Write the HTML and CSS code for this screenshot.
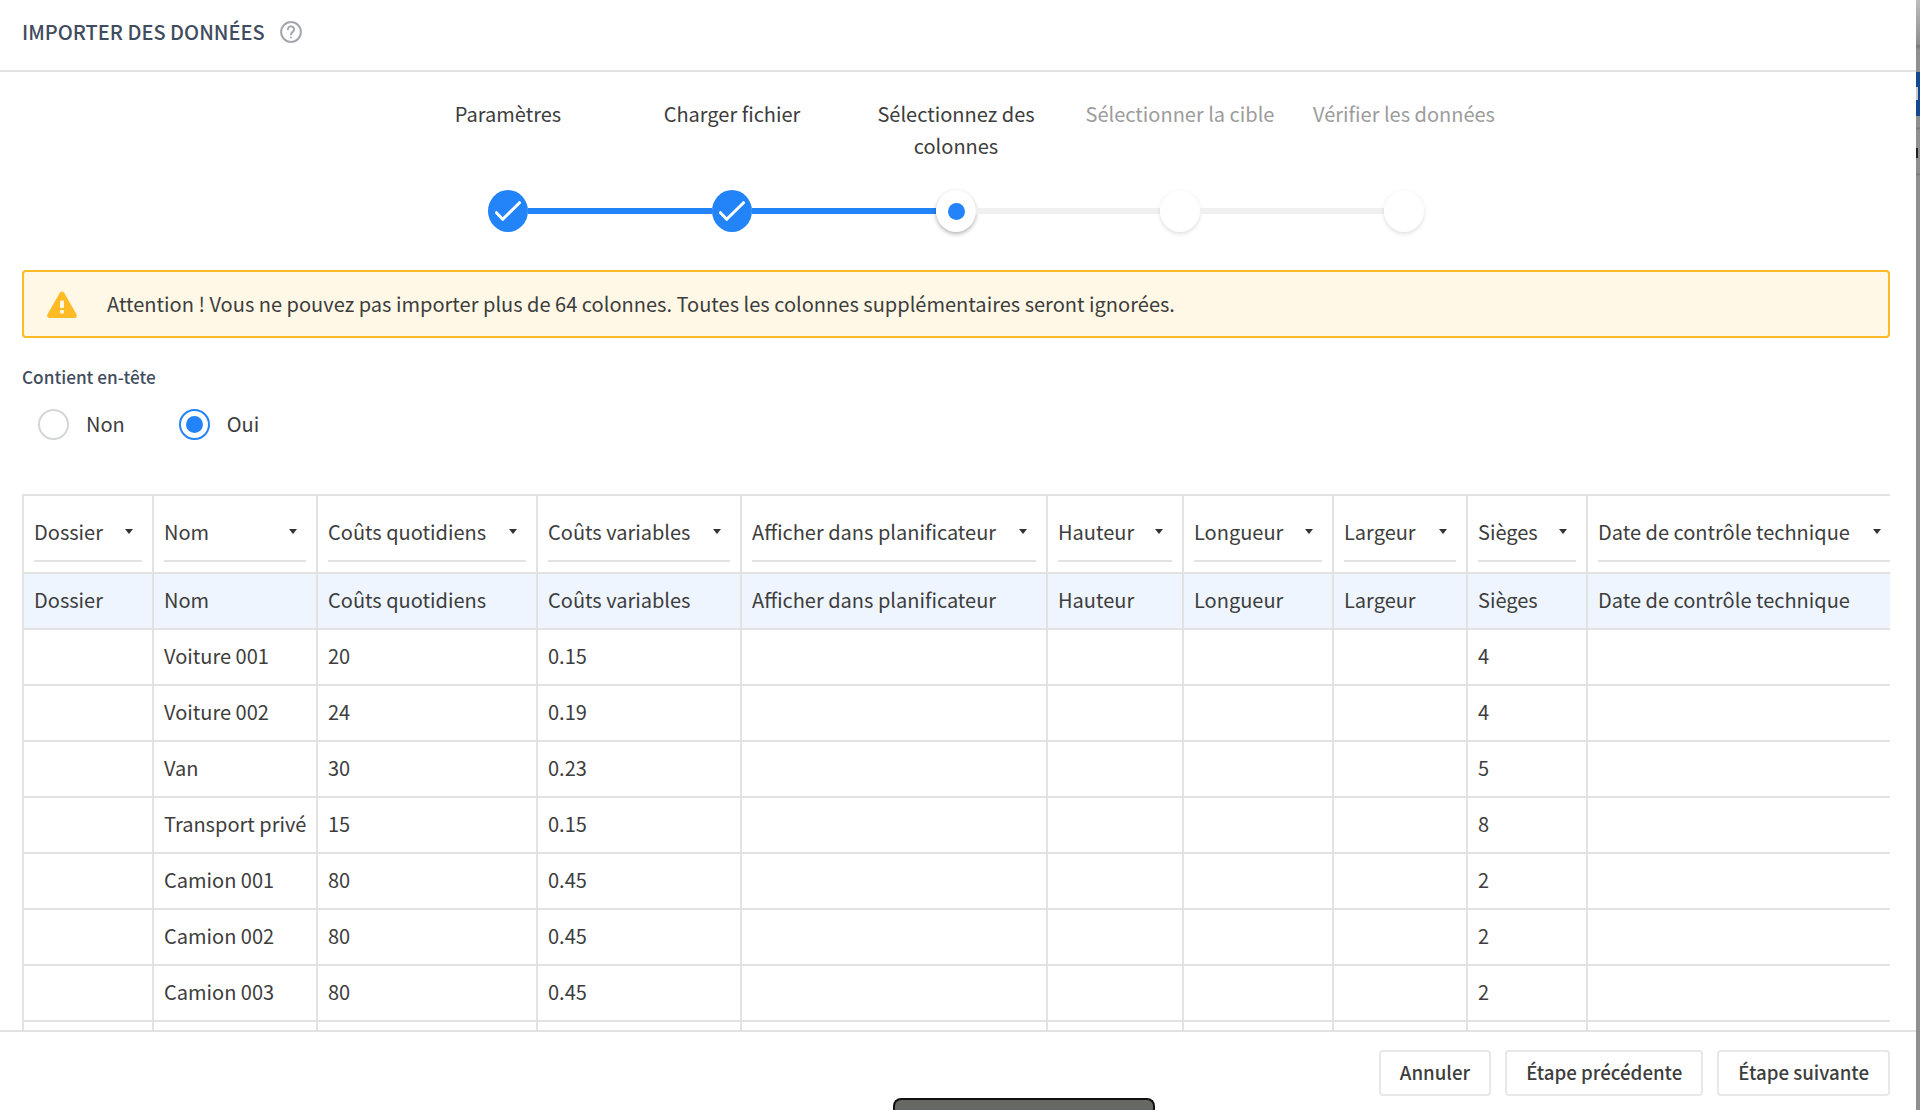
FILE: index.html
```html
<!DOCTYPE html>
<html lang="fr">
<head>
    <meta charset="UTF-8">
    <meta name="viewport" content="width=device-width, initial-scale=1.0">
    <title>Importer des données</title>
    <link rel="stylesheet" href="styles.css">
</head>
<body>

<div class="page">
<div class="dialog">
    <header class="dialog-header">
        <h1>IMPORTER DES DONNÉES</h1>
        <svg class="help-icon" viewBox="0 0 20 20" fill="none" stroke="#a3a7ae" stroke-width="1.8" stroke-linecap="round">
            <circle cx="10" cy="10" r="9"/>
            <path d="M7.2 7.6a2.8 2.8 0 1 1 4.4 2.3c-1 .7-1.6 1.2-1.6 2.4"/>
            <path d="M10 15v.1"/>
        </svg>
    </header>

    <div class="dialog-body">
        <div class="step-labels">
            <div class="step-label">Paramètres</div>
            <div class="step-label">Charger fichier</div>
            <div class="step-label">Sélectionnez des colonnes</div>
            <div class="step-label muted">Sélectionner la cible</div>
            <div class="step-label muted">Vérifier les données</div>
        </div>

        <div class="step-track">
            <div class="dot done">
                <svg viewBox="0 0 26 20" fill="none" stroke="#fff" stroke-width="3" stroke-linecap="round" stroke-linejoin="round"><path d="M1.5 11.7l6.2 6.6L24.5 1.7"/></svg>
            </div>
            <div class="bar done"></div>
            <div class="dot done">
                <svg viewBox="0 0 26 20" fill="none" stroke="#fff" stroke-width="3" stroke-linecap="round" stroke-linejoin="round"><path d="M1.5 11.7l6.2 6.6L24.5 1.7"/></svg>
            </div>
            <div class="bar done"></div>
            <div class="dot current"><span></span></div>
            <div class="bar"></div>
            <div class="dot"></div>
            <div class="bar"></div>
            <div class="dot"></div>
        </div>

        <div class="alert">
            <svg class="alert-icon" viewBox="0 0 30 27">
                <path fill="#ffbb26" stroke="#ffbb26" stroke-width="5" stroke-linejoin="round" d="M15 3L2.7 24.5h24.6z"/>
                <rect x="13" y="9.5" width="4" height="7.5" rx="1" fill="#fff8e6"/>
                <rect x="13" y="19" width="4" height="3.4" rx="1" fill="#fff8e6"/>
            </svg>
            <span class="alert-text">Attention ! Vous ne pouvez pas importer plus de 64 colonnes. Toutes les colonnes supplémentaires seront ignorées.</span>
        </div>

        <div class="field-label">Contient en-tête</div>
        <div class="radios">
            <label class="radio"><span class="radio-circle"></span>Non</label>
            <label class="radio"><span class="radio-circle checked"></span>Oui</label>
        </div>

        <div class="table-wrap">
            <table>
                <colgroup>
                    <col class="c1"><col class="c2"><col class="c3"><col class="c4"><col class="c5">
                    <col class="c6"><col class="c7"><col class="c8"><col class="c9"><col class="c10">
                </colgroup>
                <thead>
                    <tr class="selects">
                        <th><div class="select">Dossier</div></th>
                        <th><div class="select">Nom</div></th>
                        <th><div class="select">Coûts quotidiens</div></th>
                        <th><div class="select">Coûts variables</div></th>
                        <th><div class="select">Afficher dans planificateur</div></th>
                        <th><div class="select">Hauteur</div></th>
                        <th><div class="select">Longueur</div></th>
                        <th><div class="select">Largeur</div></th>
                        <th><div class="select">Sièges</div></th>
                        <th><div class="select">Date de contrôle technique</div></th>
                    </tr>
                </thead>
                <tbody>
                    <tr class="head-row"><td>Dossier</td><td>Nom</td><td>Coûts quotidiens</td><td>Coûts variables</td><td>Afficher dans planificateur</td><td>Hauteur</td><td>Longueur</td><td>Largeur</td><td>Sièges</td><td>Date de contrôle technique</td></tr>
                    <tr><td></td><td>Voiture 001</td><td>20</td><td>0.15</td><td></td><td></td><td></td><td></td><td>4</td><td></td></tr>
                    <tr><td></td><td>Voiture 002</td><td>24</td><td>0.19</td><td></td><td></td><td></td><td></td><td>4</td><td></td></tr>
                    <tr><td></td><td>Van</td><td>30</td><td>0.23</td><td></td><td></td><td></td><td></td><td>5</td><td></td></tr>
                    <tr><td></td><td>Transport privé</td><td>15</td><td>0.15</td><td></td><td></td><td></td><td></td><td>8</td><td></td></tr>
                    <tr><td></td><td>Camion 001</td><td>80</td><td>0.45</td><td></td><td></td><td></td><td></td><td>2</td><td></td></tr>
                    <tr><td></td><td>Camion 002</td><td>80</td><td>0.45</td><td></td><td></td><td></td><td></td><td>2</td><td></td></tr>
                    <tr><td></td><td>Camion 003</td><td>80</td><td>0.45</td><td></td><td></td><td></td><td></td><td>2</td><td></td></tr>
                    <tr><td></td><td></td><td></td><td></td><td></td><td></td><td></td><td></td><td></td><td></td></tr>
                </tbody>
            </table>
        </div>
    </div>

    <footer class="dialog-footer">
        <button class="btn">Annuler</button>
        <button class="btn">Étape précédente</button>
        <button class="btn">Étape suivante</button>
    </footer>
</div>
<div class="backdrop-strip"></div>
</div>
<div class="toast-edge"></div>

</body>
</html>
```

FILE: styles.css
```css
body {
    margin: 0;
    padding: 0;
    overflow: hidden;
    font-family: "Noto Sans CJK SC", "Noto Sans", sans-serif;
    font-size: 20px;
    color: #3d3d3d;
    background-color: #fff;
}
.page {
    display: flex;
    height: 1110px;
}
.dialog {
    flex: 1;
    min-width: 0;
    display: flex;
    flex-direction: column;
}
.backdrop-strip {
    width: 4px;
    background:
        linear-gradient(#c8c8c8, #c8c8c8) 0 87px / 2px 13px no-repeat,
        linear-gradient(#222, #222) 0 148px / 2px 10px no-repeat,
        linear-gradient(to bottom, #bdbdbd 0, #8f8f8f 44px, #777 46px, #8f8f8f 50px, #8f8f8f 72px, #15498f 72px, #15498f 116px, #8f8f8f 116px, #8f8f8f 127px, #777 128px, #8f8f8f 130px, #8f8f8f 173px, #777 174px, #8f8f8f 176px, #8f8f8f 100%);
}
.dialog-header {
    height: 70px;
    padding: 0 0 0 22px;
    display: flex;
    align-items: center;
    gap: 15px;
    border-bottom: 2px solid #e2e2e2;
    flex-shrink: 0;
}
h1 {
    margin: 0;
    padding-bottom: 7px;
    font-size: 20px;
    line-height: 30px;
    font-weight: 500;
    color: #3f4c5e;
}
.help-icon {
    width: 22px;
    height: 22px;
    margin-bottom: 7px;
}
.dialog-body {
    flex: 1;
    min-height: 0;
    overflow: hidden;
    padding: 26px 26px 0 22px;
}
.step-labels {
    display: grid;
    grid-template-columns: repeat(5, 224px);
    justify-content: center;
}
.step-label {
    height: 64px;
    padding: 0 8px;
    line-height: 32px;
    text-align: center;
}
.step-label.muted {
    color: #9c9c9c;
}
.step-track {
    width: 936px;
    margin: 28px auto 38px auto;
    display: flex;
    align-items: center;
}
.dot {
    width: 40px;
    height: 42px;
    border-radius: 50%;
    flex-shrink: 0;
    display: flex;
    align-items: center;
    justify-content: center;
    background-color: #fff;
    box-shadow: 0 2px 4px rgba(0,0,0,0.12);
}
.dot.done {
    background-color: #2383f8;
    box-shadow: none;
}
.dot.done svg {
    width: 26px;
    height: 20px;
}
.dot.current {
    box-shadow: 0 2px 4px rgba(0,0,0,0.3);
}
.dot.current span {
    width: 17px;
    height: 17px;
    border-radius: 50%;
    background-color: #2383f8;
}
.bar {
    flex: 1;
    height: 6px;
    background-color: #f0f0f0;
}
.bar.done {
    background-color: #2383f8;
}
.alert {
    height: 68px;
    box-sizing: border-box;
    display: flex;
    align-items: center;
    gap: 30px;
    padding-left: 23px;
    background-color: #fff8e6;
    border: 2px solid #ffbb26;
    border-radius: 4px;
}
.alert-icon {
    width: 30px;
    height: 27px;
    flex-shrink: 0;
}
.alert-text {
    font-size: 20.05px;
    padding-bottom: 2px;
}
.field-label {
    margin-top: 25px;
    font-size: 17.2px;
    line-height: 28px;
    font-weight: 500;
    color: #3f4c5e;
}
.radios {
    display: flex;
    gap: 54px;
    margin-top: 17px;
    padding-left: 16px;
}
.radio {
    display: flex;
    align-items: center;
    gap: 17px;
    line-height: 32px;
}
.radio-circle {
    width: 31px;
    height: 31px;
    box-sizing: border-box;
    border: 2px solid #d3d5d8;
    border-radius: 50%;
    display: flex;
    align-items: center;
    justify-content: center;
}
.radio-circle.checked {
    border-color: #2383f8;
}
.radio-circle.checked::after {
    content: "";
    width: 17px;
    height: 17px;
    border-radius: 50%;
    background-color: #2383f8;
}
.table-wrap {
    margin-top: 54px;
    overflow: hidden;
}
table {
    table-layout: fixed;
    width: 1878px;
    border-collapse: collapse;
}
.c1 { width: 130px; }
.c2 { width: 164px; }
.c3 { width: 220px; }
.c4 { width: 204px; }
.c5 { width: 306px; }
.c6 { width: 136px; }
.c7 { width: 150px; }
.c8 { width: 134px; }
.c9 { width: 120px; }
.c10 { width: 314px; }
th,
td {
    border: 2px solid #e2e2e2;
    padding: 0 10px;
    font-weight: 400;
    text-align: left;
    white-space: nowrap;
    line-height: 30px;
}
td {
    height: 52px;
    padding-bottom: 2px;
}
.selects th {
    padding: 14px 10px 10px 10px;
    vertical-align: top;
}
.head-row td {
    background-color: #eef5fe;
}
.select {
    position: relative;
    height: 52px;
    line-height: 44px;
    border-bottom: 2px solid #e2e2e2;
    box-sizing: border-box;
}
.select::after {
    content: "";
    position: absolute;
    right: 9px;
    top: 19px;
    border-left: 4.5px solid transparent;
    border-right: 4.5px solid transparent;
    border-top: 5.5px solid #333;
}
.dialog-footer {
    height: 80px;
    box-sizing: border-box;
    flex-shrink: 0;
    border-top: 2px solid #e2e2e2;
    padding: 18px 26px 0 0;
    display: flex;
    justify-content: flex-end;
    align-items: flex-start;
    gap: 14px;
    background-color: #fff;
}
.btn {
    height: 46px;
    padding: 0 19px 4px 19px;
    font-family: inherit;
    font-size: 18.7px;
    font-weight: 500;
    color: #3d3d3d;
    background-color: #fff;
    border: 2px solid #e8e8e8;
    border-radius: 4px;
}
.toast-edge {
    position: absolute;
    left: 893px;
    bottom: 0;
    width: 262px;
    height: 12px;
    box-sizing: border-box;
    background-color: #666864;
    border: 2px solid #111;
    border-bottom: none;
    border-radius: 8px 8px 0 0;
}
```
